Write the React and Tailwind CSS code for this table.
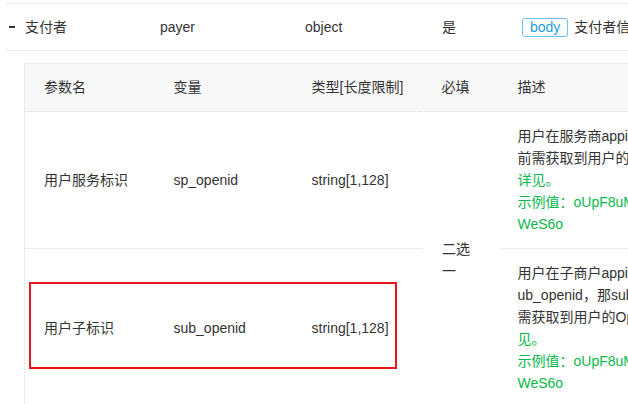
export default function App() {
  const font = { fontFamily: '"Liberation Sans", "Noto Sans CJK SC", sans-serif' };

  return (
    <div className="w-full h-[404px] overflow-hidden bg-white text-[14px] text-[#333]" style={font}>
      <div className="pl-[6px] pt-[3px] w-[780px]">
        {/* outer row */}
        <div className="flex items-center h-[48px] border-y border-[#ebebeb]">
          <div className="w-[154px] flex items-center">
            <span className="ml-[3px] w-[6px] h-[2px] bg-[#333]"></span>
            <span className="ml-[10px]">支付者</span>
          </div>
          <div className="w-[145px]">payer</div>
          <div className="w-[137px]">object</div>
          <div className="w-[80px]">是</div>
          <div className="flex items-center gap-[6px] whitespace-nowrap">
            <span className="px-[7px] leading-[17px] border border-[#6cc0ea] rounded-[3px] text-[#1a9fe0]">body</span>
            <span>支付者信息</span>
          </div>
        </div>

        {/* nested table */}
        <div className="relative pl-[18px] pt-[12px]">
          <table className="table-fixed border-collapse w-[770px] border-l border-t border-[#ebebeb]">
            <colgroup>
              <col className="w-[131px]" />
              <col className="w-[138px]" />
              <col className="w-[130px]" />
              <col className="w-[76px]" />
              <col className="w-[295px]" />
            </colgroup>
            <thead>
              <tr className="bg-[#f8f8f8] border-b border-[#ebebeb] h-[48px]">
                <th className="text-left font-normal pl-[19px]">参数名</th>
                <th className="text-left font-normal pl-[18px]">变量</th>
                <th className="text-left font-normal pl-[18px]">类型[长度限制]</th>
                <th className="text-left font-normal pl-[18px]">必填</th>
                <th className="text-left font-normal pl-[18px]">描述</th>
              </tr>
            </thead>
            <tbody className="leading-[22px]">
              <tr className="border-b border-[#ebebeb]">
                <td className="pl-[19px]">用户服务标识</td>
                <td className="pl-[18px]">sp_openid</td>
                <td className="pl-[18px]">string[1,128]</td>
                <td rowSpan={2} className="px-[18px] align-middle border-l border-[#fff]">二选一</td>
                <td className="pl-[18px] py-[13px] whitespace-nowrap">
                  <div>用户在服务商appid下的唯一标识。下单</div>
                  <div>前需获取到用户的Openid，Openid获取</div>
                  <div className="text-[#07b94a]">详见。</div>
                  <div className="text-[#07b94a]">示例值：oUpF8uMuAJO_M2pxb1Q9zNj</div>
                  <div className="text-[#07b94a]">WeS6o</div>
                </td>
              </tr>
              <tr>
                <td className="pl-[19px]">用户子标识</td>
                <td className="pl-[18px]">sub_openid</td>
                <td className="pl-[18px]">string[1,128]</td>
                <td className="pl-[18px] py-[13px] whitespace-nowrap">
                  <div>用户在子商户appid下的唯一标识。若传s</div>
                  <div>ub_openid，那sub_appid必填。下单前</div>
                  <div>需获取到用户的Openid，Openid获取<span className="text-[#07b94a]">详</span></div>
                  <div className="text-[#07b94a]">见。</div>
                  <div className="text-[#07b94a]">示例值：oUpF8uMuAJO_M2pxb1Q9zNj</div>
                  <div className="text-[#07b94a]">WeS6o</div>
                </td>
              </tr>
            </tbody>
          </table>
          {/* red annotation box */}
          <div className="absolute top-[231px] left-[23px] w-[368px] h-[87px] border-2 border-[#e8161b]"></div>
        </div>
      </div>
    </div>
  );
}
